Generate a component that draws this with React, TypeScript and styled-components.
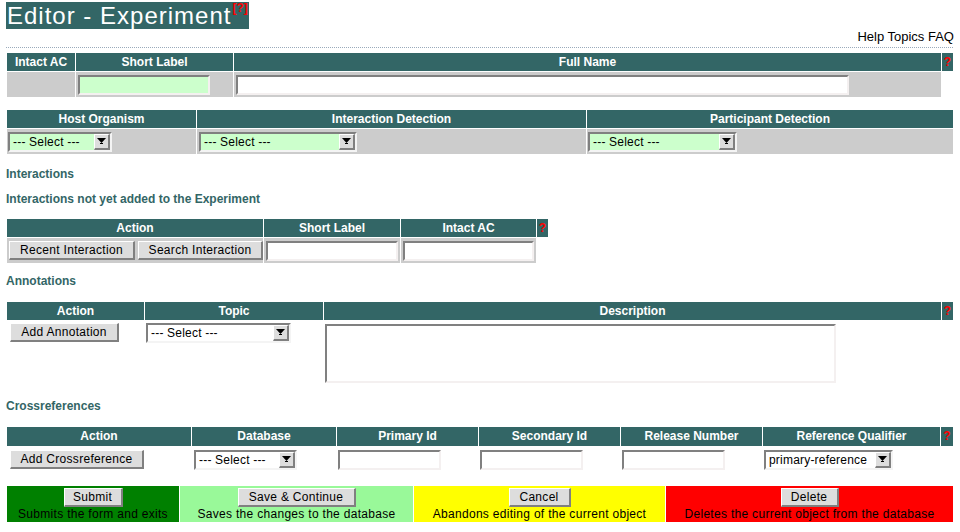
import React from "react";
import styled, { createGlobalStyle } from "styled-components";

const Global = createGlobalStyle`
  html, body { margin: 0; padding: 0; background: #ffffff; }
  body { font-family: "Liberation Sans", Arial, sans-serif; font-size: 12px; color: #000; }
`;

const TEAL = "#336666";

const Page = styled.div`
  width: 947px;
  padding: 2px 0 0 6px;
  display: flex;
  flex-direction: column;
`;

const TitleRow = styled.div`
  display: flex;
`;

const Title = styled.h1`
  margin: 0;
  height: 27px;
  padding: 0 0 0 1px;
  background: ${TEAL};
  color: #ffffff;
  font-family: "Liberation Sans", Arial, sans-serif;
  font-weight: normal;
  font-size: 24px;
  letter-spacing: 1px;
  line-height: 27px;
  display: flex;
  align-items: flex-start;
`;

const HelpMark = styled.sup`
  color: #ff0000;
  font-size: 12px;
  font-weight: bold;
  letter-spacing: 0;
  line-height: 12px;
  margin-left: 1px;
  padding-right: 1px;
  vertical-align: top;
`;

const HelpLinks = styled.div`
  align-self: flex-end;
  font-size: 13px;
  line-height: 15px;
  margin-right: -1px;
  height: 15px;
`;

const Rule = styled.div`
  margin-top: 3px;
  border-top: 1px dotted #9aaabb;
  height: 0;
`;

const Grid = styled.div<{ $cols: string; $mt: number }>`
  display: grid;
  grid-template-columns: ${(p) => p.$cols};
  column-gap: 1px;
  row-gap: 1px;
  margin-top: ${(p) => p.$mt}px;
  margin-left: 1px;
  width: max-content;
  background: #ffffff;
`;

const Head = styled.div<{ $h?: number }>`
  background: ${TEAL};
  color: #ffffff;
  font-weight: bold;
  font-size: 12px;
  height: ${(p) => p.$h ?? 18}px;
  line-height: ${(p) => p.$h ?? 18}px;
  text-align: center;
  white-space: nowrap;
  overflow: hidden;
`;

const Mark = styled(Head)`
  color: #ff0000;
`;

const Cell = styled.div<{ $gray?: boolean; $h: number; $top?: boolean }>`
  background: ${(p) => (p.$gray ? "#cccccc" : "#ffffff")};
  height: ${(p) => p.$h}px;
  padding: 2px;
  box-sizing: border-box;
  display: flex;
  gap: 3px;
  align-items: ${(p) => (p.$top ? "flex-start" : "center")};
`;

const Empty = styled.div`
  background: #ffffff;
`;

const TextInput = styled.div<{ $w: number; $green?: boolean; $h?: number }>`
  width: ${(p) => p.$w}px;
  height: ${(p) => p.$h ?? 20}px;
  box-sizing: border-box;
  background: ${(p) => (p.$green ? "#ccffcc" : "#ffffff")};
  border-style: solid;
  border-width: 2px;
  border-color: #808080 #f4f0f0 #f4f0f0 #808080;
  flex: none;
`;

const SelectBox = styled.div<{ $w: number; $green?: boolean }>`
  width: ${(p) => p.$w}px;
  height: 20px;
  box-sizing: border-box;
  background: ${(p) => (p.$green ? "#ccffcc" : "#ffffff")};
  border-style: solid;
  border-width: 2px;
  border-color: #808080 #f4f4f4 #f4f4f4 #808080;
  display: flex;
  align-items: center;
  justify-content: space-between;
  padding-left: 3px;
  font-size: 12px;
  letter-spacing: 0.2px;
  flex: none;
`;

const Arrow = styled.div`
  width: 16px;
  height: 16px;
  box-sizing: border-box;
  background: #dddddd;
  border-style: solid;
  border-width: 1px 2px 2px 1px;
  border-color: #ffffff #808080 #808080 #ffffff;
  display: flex;
  align-items: center;
  justify-content: center;
`;

const Button = styled.div<{ $w: number }>`
  width: ${(p) => p.$w}px;
  height: 19px;
  box-sizing: border-box;
  background: #dddddd;
  border-style: solid;
  border-width: 1px 2px 2px 1px;
  border-color: #ffffff #808080 #808080 #ffffff;
  font-size: 12px;
  letter-spacing: 0.3px;
  line-height: 16px;
  text-align: center;
  white-space: nowrap;
  flex: none;
`;

const Section = styled.div<{ $mt: number }>`
  margin-top: ${(p) => p.$mt}px;
  color: ${TEAL};
  font-weight: bold;
  font-size: 12px;
  line-height: 14px;
`;

const ActionBar = styled.div`
  display: grid;
  grid-template-columns: 172px 233px 251px 287px;
  column-gap: 1px;
  margin-top: 14px;
  margin-left: 1px;
  width: max-content;
`;

const ActionCell = styled.div<{ $bg: string }>`
  background: ${(p) => p.$bg};
  height: 36px;
  display: flex;
  flex-direction: column;
  align-items: center;
  padding-top: 2px;
  box-sizing: border-box;
`;

const ActionText = styled.div`
  font-size: 12px;
  letter-spacing: 0.3px;
  line-height: 13px;
  margin-top: 1px;
  white-space: nowrap;
`;

const Select = ({ w, green, label = "--- Select ---" }: { w: number; green?: boolean; label?: string }) => (
  <SelectBox $w={w} $green={green}>
    <span>{label}</span>
    <Arrow>
      <svg width="9" height="7" viewBox="0 0 9 7">
        <polygon points="0,0 9,0 4.5,5" fill="#000" />
        <rect x="3" y="5" width="3" height="1" fill="#000" />
      </svg>
    </Arrow>
  </SelectBox>
);

export default function App() {
  return (
    <>
      <Global />
      <Page>
        <TitleRow>
          <Title>
            Editor - Experiment<HelpMark>[?]</HelpMark>
          </Title>
        </TitleRow>
        <HelpLinks>Help Topics FAQ</HelpLinks>
        <Rule />

        <Grid $cols="68px 157px 707px 11px" $mt={5}>
          <Head>Intact AC</Head>
          <Head>Short Label</Head>
          <Head>Full Name</Head>
          <Mark>?</Mark>
          <Cell $gray $h={25} />
          <Cell $gray $h={25}>
            <TextInput $w={132} $green />
          </Cell>
          <Cell $gray $h={25}>
            <TextInput $w={613} />
          </Cell>
          <Empty />
        </Grid>

        <Grid $cols="189px 389px 366px" $mt={13}>
          <Head>Host Organism</Head>
          <Head>Interaction Detection</Head>
          <Head>Participant Detection</Head>
          <Cell $gray $h={25} style={{ paddingLeft: 1 }}>
            <Select w={104} green />
          </Cell>
          <Cell $gray $h={25}>
            <Select w={158} green />
          </Cell>
          <Cell $gray $h={25} style={{ paddingLeft: 1 }}>
            <Select w={149} green />
          </Cell>
        </Grid>

        <Section $mt={13}>Interactions</Section>
        <Section $mt={11}>Interactions not yet added to the Experiment</Section>

        <Grid $cols="256px 136px 135px 11px" $mt={13}>
          <Head>Action</Head>
          <Head>Short Label</Head>
          <Head>Intact AC</Head>
          <Mark>?</Mark>
          <Cell $gray $h={25}>
            <Button $w={126}>Recent Interaction</Button>
            <Button $w={125}>Search Interaction</Button>
          </Cell>
          <Cell $gray $h={25}>
            <TextInput $w={132} />
          </Cell>
          <Cell $gray $h={25}>
            <TextInput $w={131} />
          </Cell>
          <Empty />
        </Grid>

        <Section $mt={11}>Annotations</Section>

        <Grid $cols="137px 178px 617px 11px" $mt={14}>
          <Head>Action</Head>
          <Head>Topic</Head>
          <Head>Description</Head>
          <Mark>?</Mark>
          <Cell $h={64} $top style={{ paddingLeft: 3 }}>
            <Button $w={109}>Add Annotation</Button>
          </Cell>
          <Cell $h={64} $top style={{ paddingLeft: 1 }}>
            <Select w={145} />
          </Cell>
          <Cell $h={64} $top style={{ paddingLeft: 1, paddingTop: 3 }}>
            <TextInput $w={511} $h={59} />
          </Cell>
          <Empty />
        </Grid>

        <Section $mt={14}>Crossreferences</Section>

        <Grid $cols="184px 144px 141px 141px 141px 177px 12px" $mt={14}>
          <Head $h={19}>Action</Head>
          <Head $h={19}>Database</Head>
          <Head $h={19}>Primary Id</Head>
          <Head $h={19}>Secondary Id</Head>
          <Head $h={19}>Release Number</Head>
          <Head $h={19}>Reference Qualifier</Head>
          <Mark $h={19}>?</Mark>
          <Cell $h={25} style={{ paddingLeft: 3 }}>
            <Button $w={134}>Add Crossreference</Button>
          </Cell>
          <Cell $h={25}>
            <Select w={103} />
          </Cell>
          <Cell $h={25} style={{ paddingLeft: 1 }}>
            <TextInput $w={103} />
          </Cell>
          <Cell $h={25} style={{ paddingLeft: 1 }}>
            <TextInput $w={103} />
          </Cell>
          <Cell $h={25} style={{ paddingLeft: 1 }}>
            <TextInput $w={103} />
          </Cell>
          <Cell $h={25} style={{ paddingLeft: 1 }}>
            <Select w={129} label="primary-reference" />
          </Cell>
          <Empty />
        </Grid>

        <ActionBar>
          <ActionCell $bg="#008000">
            <Button $w={59}>Submit</Button>
            <ActionText>Submits the form and exits</ActionText>
          </ActionCell>
          <ActionCell $bg="#99f999">
            <Button $w={118}>Save &amp; Continue</Button>
            <ActionText>Saves the changes to the database</ActionText>
          </ActionCell>
          <ActionCell $bg="#ffff00">
            <Button $w={62}>Cancel</Button>
            <ActionText>Abandons editing of the current object</ActionText>
          </ActionCell>
          <ActionCell $bg="#ff0000">
            <Button $w={58}>Delete</Button>
            <ActionText>Deletes the current object from the database</ActionText>
          </ActionCell>
        </ActionBar>
      </Page>
    </>
  );
}
